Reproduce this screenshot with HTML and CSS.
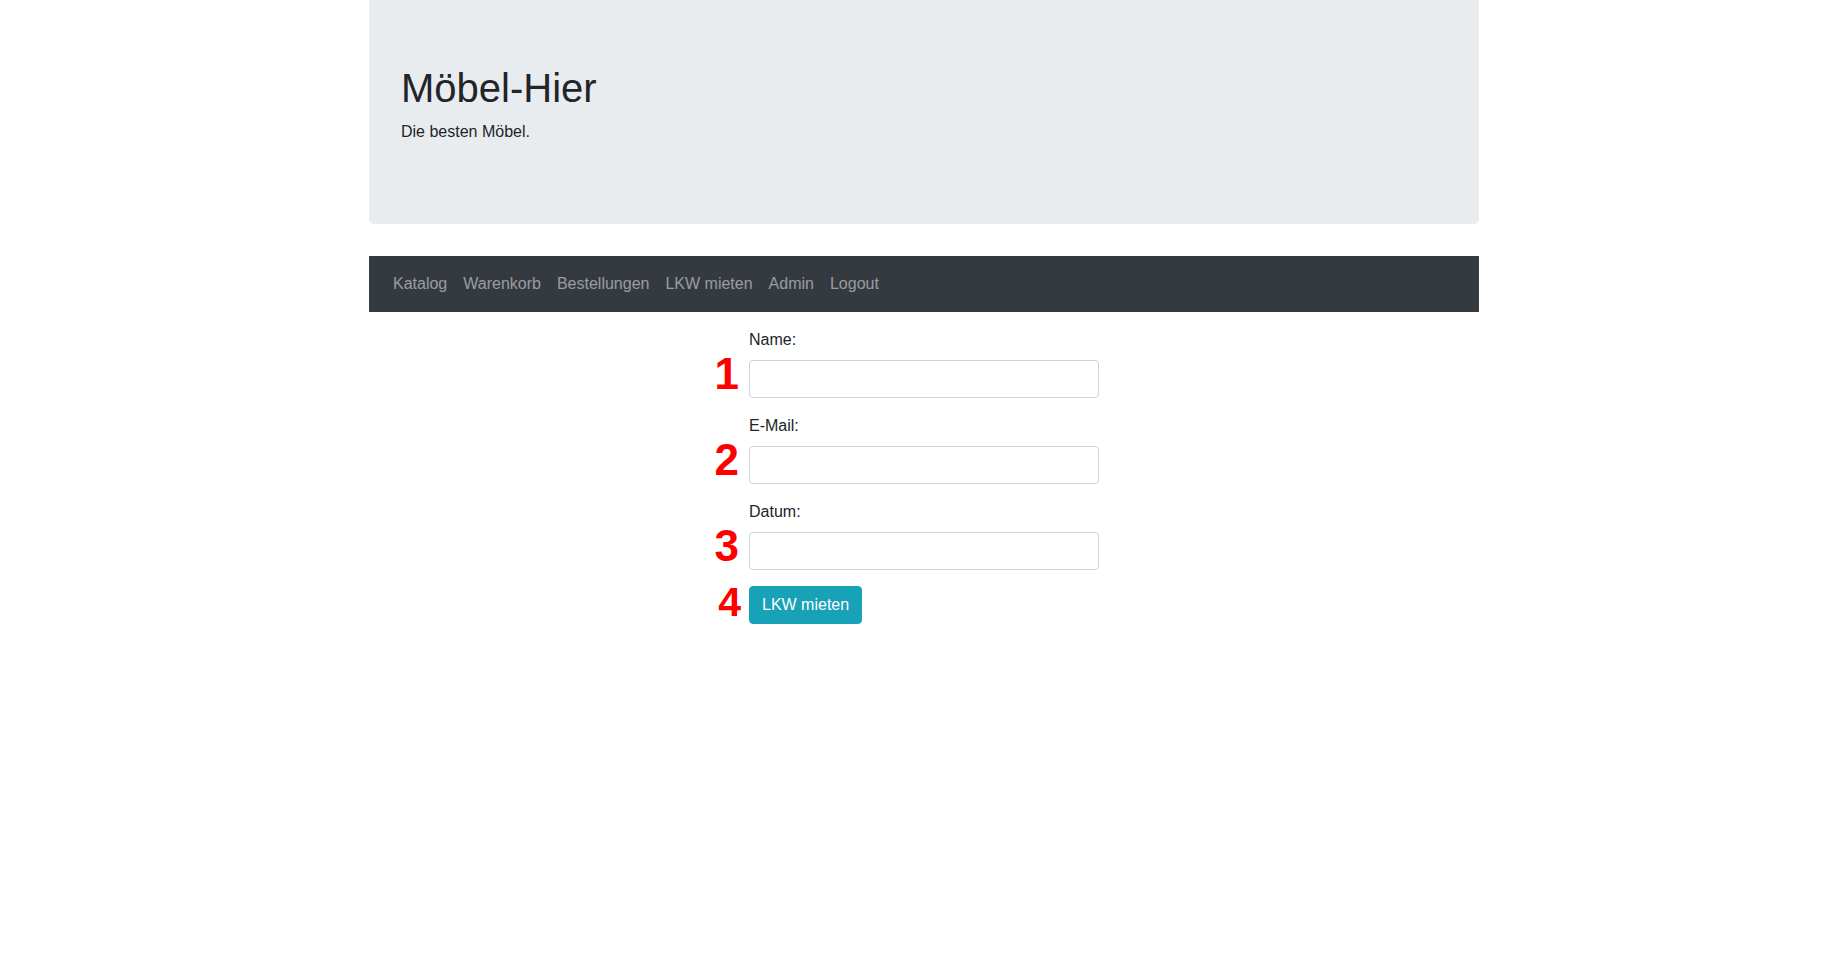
FILE: index.html
```html
<!DOCTYPE html>
<html lang="de">
<head>
<meta charset="utf-8">
<title>Möbel-Hier</title>
<link rel="stylesheet" href="styles.css">
</head>
<body>
<div class="container">
  <header class="jumbotron">
    <h1 class="title">Möbel-Hier</h1>
    <p class="lead-text">Die besten Möbel.</p>
  </header>
  <nav class="navbar">
    <ul class="nav-list">
      <li><a class="nav-link" href="#">Katalog</a></li>
      <li><a class="nav-link" href="#">Warenkorb</a></li>
      <li><a class="nav-link" href="#">Bestellungen</a></li>
      <li><a class="nav-link" href="#">LKW mieten</a></li>
      <li><a class="nav-link" href="#">Admin</a></li>
      <li><a class="nav-link" href="#">Logout</a></li>
    </ul>
  </nav>
  <form class="rent-form">
    <div class="form-group">
      <label class="form-label" for="name">Name:</label>
      <div class="field">
        <span class="marker">1</span>
        <input class="form-control" id="name" type="text">
      </div>
    </div>
    <div class="form-group">
      <label class="form-label" for="email">E-Mail:</label>
      <div class="field">
        <span class="marker">2</span>
        <input class="form-control" id="email" type="text">
      </div>
    </div>
    <div class="form-group">
      <label class="form-label" for="datum">Datum:</label>
      <div class="field">
        <span class="marker">3</span>
        <input class="form-control" id="datum" type="text">
      </div>
    </div>
    <div class="field">
      <span class="marker marker-btn">4</span>
      <button class="btn-info" type="button">LKW mieten</button>
    </div>
  </form>
</div>
</body>
</html>
```

FILE: styles.css
```css
* { box-sizing: border-box; }

html, body {
  margin: 0;
  padding: 0;
  background: #fff;
}

body {
  font-family: "Liberation Sans", Arial, sans-serif;
  font-size: 16px;
  line-height: 1.5;
  color: #212529;
}

.container {
  width: 1140px;
  padding: 0 15px;
  margin: 0 auto;
}

.jumbotron {
  background: #e9ecef;
  border-radius: 0 0 4.8px 4.8px;
  padding: 64px 32px;
  margin-bottom: 32px;
}

.title {
  margin: 0 0 8px;
  font-size: 40px;
  font-weight: 400;
  line-height: 1.2;
}

.lead-text {
  margin: 0 0 16px;
}

.navbar {
  background: #343a40;
  padding: 8px 16px;
}

.nav-list {
  list-style: none;
  margin: 0;
  padding: 0;
  display: flex;
}

.nav-link {
  display: block;
  padding: 8px;
  color: rgba(255, 255, 255, 0.5);
  text-decoration: none;
}

.rent-form {
  width: 350px;
  margin: 16px auto 0;
}

.form-group {
  margin-bottom: 16px;
}

.form-label {
  display: block;
  margin-bottom: 8px;
}

.field {
  position: relative;
}

.marker {
  position: absolute;
  right: calc(100% + 10px);
  top: -8px;
  font-family: "Liberation Sans", Arial, sans-serif;
  font-weight: 700;
  font-size: 44px;
  line-height: 1;
  color: #ff0000;
}

.marker-btn {
  top: -4px;
  font-size: 41px;
  right: calc(100% + 8px);
}

.form-control {
  display: block;
  width: 100%;
  height: 38px;
  padding: 6px 12px;
  font: inherit;
  color: #495057;
  background: #fff;
  border: 1px solid #ced4da;
  border-radius: 4px;
}

.btn-info {
  display: inline-block;
  font: inherit;
  line-height: 1.5;
  padding: 6px 12px;
  color: #fff;
  background: #17a2b8;
  border: 1px solid #17a2b8;
  border-radius: 4px;
}
```
